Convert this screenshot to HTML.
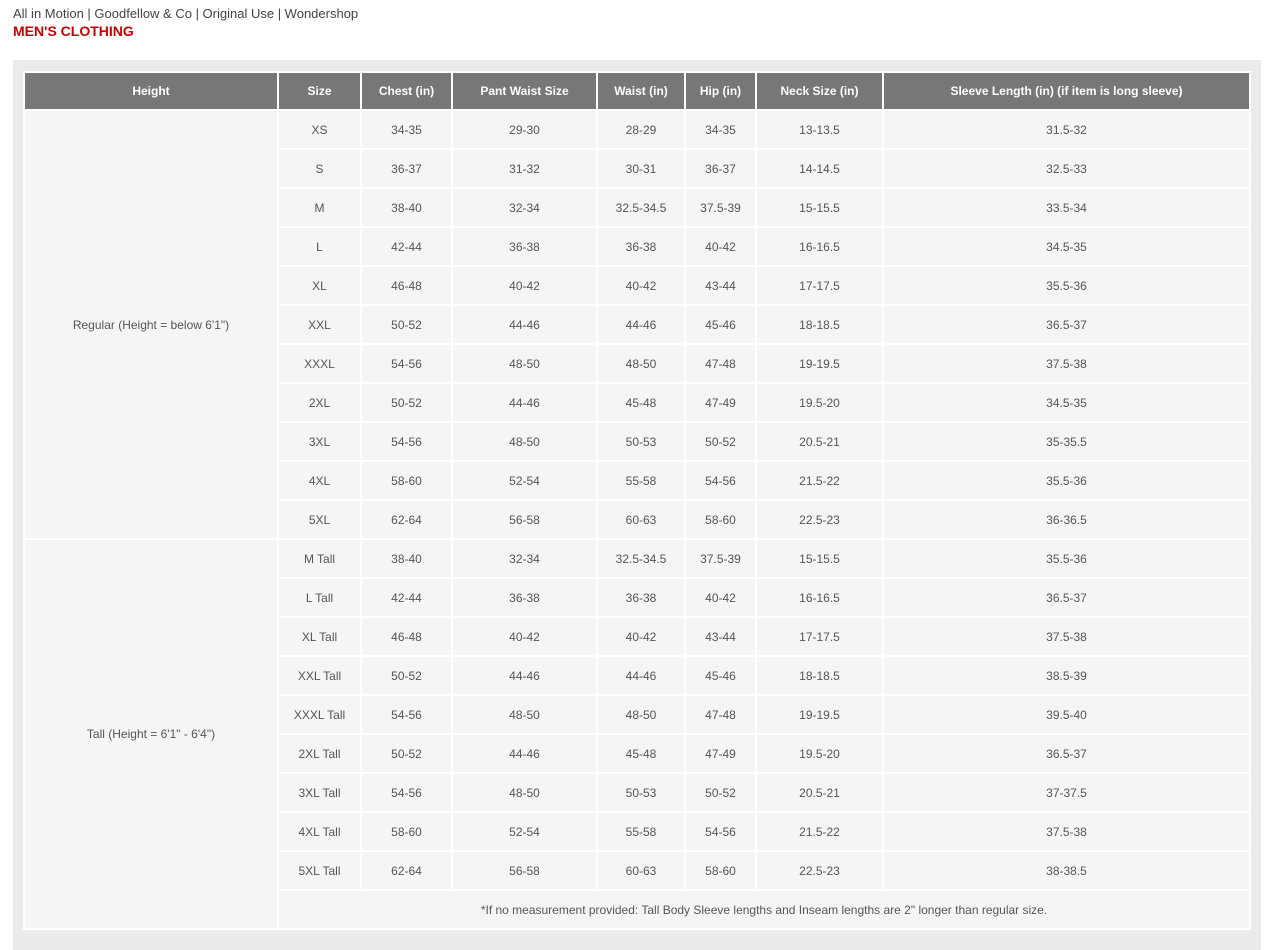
<!DOCTYPE html>
<html><head><meta charset="utf-8"><style>
body{margin:0;background:#fff;font-family:"Liberation Sans",Arial,sans-serif;width:1267px;height:940px;overflow:hidden}
.brands{position:absolute;left:13px;top:6px;font-size:13px;color:#444}
.title{position:absolute;left:13px;top:23px;font-size:14px;font-weight:bold;color:#cc0000}
.box{position:absolute;left:13px;top:60px;width:1248px;height:890px;background:#ebebeb}
table{position:absolute;left:23px;top:71px;border-collapse:separate;border-spacing:2px;background:#fff;table-layout:fixed}
th{background:#777;color:#fff;font-size:12px;font-weight:bold;height:36px;padding:0;text-align:center}
td{background:#f5f5f5;color:#555;font-size:12px;height:37px;padding:0;text-align:center}
</style></head><body>
<div class="brands">All in Motion | Goodfellow &amp; Co | Original Use | Wondershop</div>
<div class="title">MEN'S CLOTHING</div>
<div class="box"></div>
<table>
<colgroup><col style="width:252px"><col style="width:81px"><col style="width:89px"><col style="width:143px"><col style="width:86px"><col style="width:69px"><col style="width:125px"><col style="width:365px"></colgroup>
<tr><th>Height</th><th>Size</th><th>Chest (in)</th><th>Pant Waist Size</th><th>Waist (in)</th><th>Hip (in)</th><th>Neck Size (in)</th><th>Sleeve Length (in) (if item is long sleeve)</th></tr>
<tr><td rowspan="11">Regular (Height = below 6'1")</td><td>XS</td><td>34-35</td><td>29-30</td><td>28-29</td><td>34-35</td><td>13-13.5</td><td>31.5-32</td></tr>
<tr><td>S</td><td>36-37</td><td>31-32</td><td>30-31</td><td>36-37</td><td>14-14.5</td><td>32.5-33</td></tr>
<tr><td>M</td><td>38-40</td><td>32-34</td><td>32.5-34.5</td><td>37.5-39</td><td>15-15.5</td><td>33.5-34</td></tr>
<tr><td>L</td><td>42-44</td><td>36-38</td><td>36-38</td><td>40-42</td><td>16-16.5</td><td>34.5-35</td></tr>
<tr><td>XL</td><td>46-48</td><td>40-42</td><td>40-42</td><td>43-44</td><td>17-17.5</td><td>35.5-36</td></tr>
<tr><td>XXL</td><td>50-52</td><td>44-46</td><td>44-46</td><td>45-46</td><td>18-18.5</td><td>36.5-37</td></tr>
<tr><td>XXXL</td><td>54-56</td><td>48-50</td><td>48-50</td><td>47-48</td><td>19-19.5</td><td>37.5-38</td></tr>
<tr><td>2XL</td><td>50-52</td><td>44-46</td><td>45-48</td><td>47-49</td><td>19.5-20</td><td>34.5-35</td></tr>
<tr><td>3XL</td><td>54-56</td><td>48-50</td><td>50-53</td><td>50-52</td><td>20.5-21</td><td>35-35.5</td></tr>
<tr><td>4XL</td><td>58-60</td><td>52-54</td><td>55-58</td><td>54-56</td><td>21.5-22</td><td>35.5-36</td></tr>
<tr><td>5XL</td><td>62-64</td><td>56-58</td><td>60-63</td><td>58-60</td><td>22.5-23</td><td>36-36.5</td></tr>
<tr><td rowspan="10">Tall (Height = 6'1" - 6'4")</td><td>M Tall</td><td>38-40</td><td>32-34</td><td>32.5-34.5</td><td>37.5-39</td><td>15-15.5</td><td>35.5-36</td></tr>
<tr><td>L Tall</td><td>42-44</td><td>36-38</td><td>36-38</td><td>40-42</td><td>16-16.5</td><td>36.5-37</td></tr>
<tr><td>XL Tall</td><td>46-48</td><td>40-42</td><td>40-42</td><td>43-44</td><td>17-17.5</td><td>37.5-38</td></tr>
<tr><td>XXL Tall</td><td>50-52</td><td>44-46</td><td>44-46</td><td>45-46</td><td>18-18.5</td><td>38.5-39</td></tr>
<tr><td>XXXL Tall</td><td>54-56</td><td>48-50</td><td>48-50</td><td>47-48</td><td>19-19.5</td><td>39.5-40</td></tr>
<tr><td>2XL Tall</td><td>50-52</td><td>44-46</td><td>45-48</td><td>47-49</td><td>19.5-20</td><td>36.5-37</td></tr>
<tr><td>3XL Tall</td><td>54-56</td><td>48-50</td><td>50-53</td><td>50-52</td><td>20.5-21</td><td>37-37.5</td></tr>
<tr><td>4XL Tall</td><td>58-60</td><td>52-54</td><td>55-58</td><td>54-56</td><td>21.5-22</td><td>37.5-38</td></tr>
<tr><td>5XL Tall</td><td>62-64</td><td>56-58</td><td>60-63</td><td>58-60</td><td>22.5-23</td><td>38-38.5</td></tr>
<tr><td colspan="7">*If no measurement provided: Tall Body Sleeve lengths and Inseam lengths are 2" longer than regular size.</td></tr>
</table>
</body></html>
